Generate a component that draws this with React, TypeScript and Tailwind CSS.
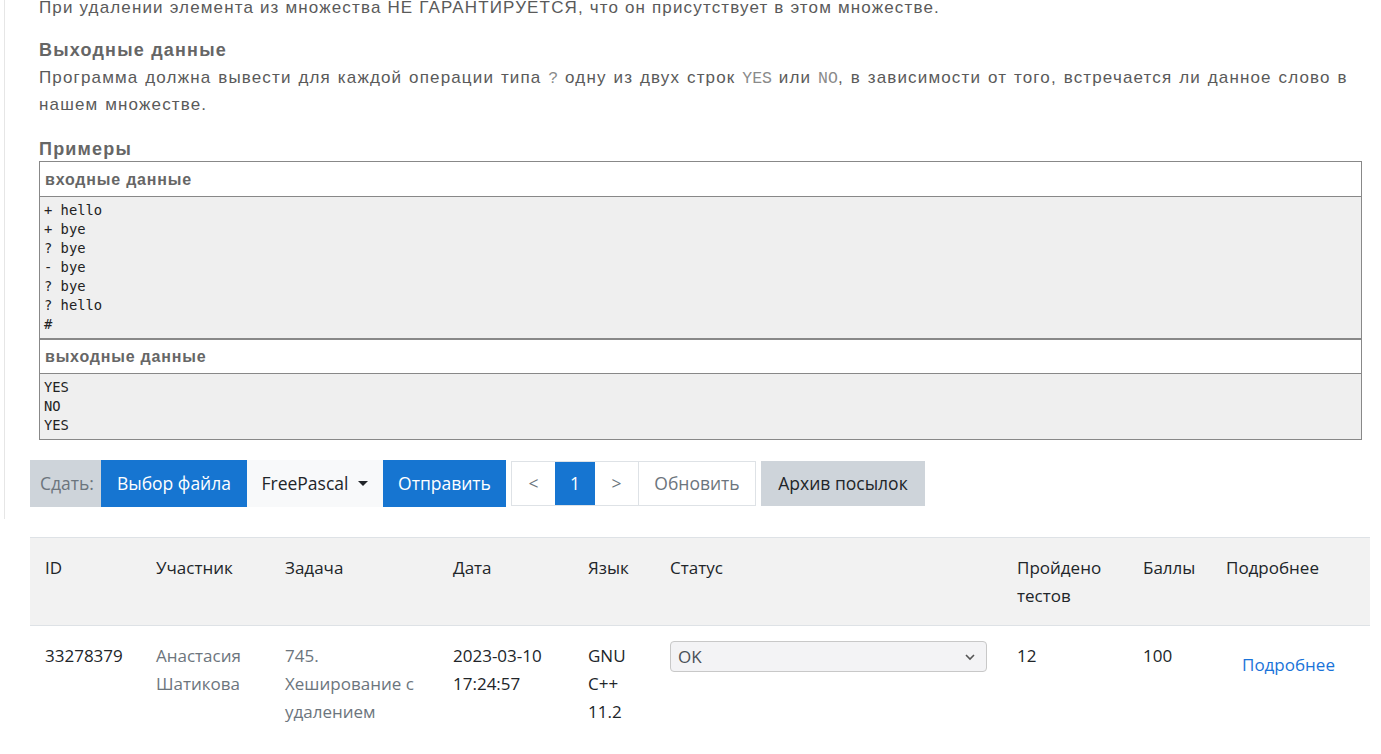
const sans = "font-['Open_Sans','Noto_Sans',sans-serif]";

const inputLines = ["+ hello", "+ bye", "? bye", "- bye", "? bye", "? hello", "#"];
const outputLines = ["YES", "NO", "YES"];

const columns = [
  { title: "ID", width: 111 },
  { title: "Участник", width: 129 },
  { title: "Задача", width: 168 },
  { title: "Дата", width: 135 },
  { title: "Язык", width: 82 },
  { title: "Статус", width: 347 },
  { title: "Пройдено тестов", width: 126 },
  { title: "Баллы", width: 83 },
  { title: "Подробнее", width: 159 },
];

const Code = ({ children }: { children: string }) => (
  <span className="font-['Liberation_Mono',monospace] text-[16.5px] leading-none tracking-normal text-[#8a8a8a]">{children}</span>
);

const SampleBox = ({ title, lines, thin }: { title: string; lines: string[]; thin?: boolean }) => (
  <div className="border border-[#888888]">
    <div className={`border-b border-[#888888] px-[5px] font-['Liberation_Sans',sans-serif] text-[16px] font-bold tracking-[0.8px] text-[#666666] ${thin ? "h-[34px] leading-[34px]" : "h-[35px] leading-[35px]"}`}>
      {title}
    </div>
    <pre className="bg-[#efefef] px-[4px] py-[4px] font-['DejaVu_Sans_Mono',monospace] text-[13.8px] leading-[19px] tracking-normal text-[#222222]">
      {lines.join("\n")}
    </pre>
  </div>
);

const SubmitBar = () => (
  <div className={`flex h-[47px] items-stretch text-[17.5px] ${sans}`}>
    <div className="flex items-center bg-[#ced4da] pl-[10px] pr-[7px] text-[#6c757d]">Сдать:</div>
    <button className="flex w-[146px] items-center justify-center bg-[#1675d1] text-white">Выбор файла</button>
    <button className="flex w-[136px] items-center justify-center gap-[10px] bg-[#f8f9fa] text-[#212529]">
      FreePascal
      <span className="h-0 w-0 border-x-[5px] border-t-[5px] border-x-transparent border-t-[#212529]" />
    </button>
    <button className="flex w-[123px] items-center justify-center bg-[#1675d1] text-white">Отправить</button>
    <div className="ml-[5px] flex h-[45px] self-center border border-[#dee2e6] bg-white">
      <button className="flex w-[43px] items-center justify-center text-[#6c757d]">&lt;</button>
      <button className="flex w-[40px] items-center justify-center bg-[#1675d1] text-white">1</button>
      <button className="flex w-[44px] items-center justify-center border-r border-[#dee2e6] text-[#6c757d]">&gt;</button>
      <button className="flex w-[116px] items-center justify-center text-[#6c757d]">Обновить</button>
    </div>
    <button className="ml-[5px] flex h-[45px] w-[164px] items-center justify-center self-center bg-[#ced4da] text-[#212529]">
      Архив посылок
    </button>
  </div>
);

const Chevron = () => (
  <svg width="12" height="8" viewBox="0 0 12 8" fill="none" stroke="#555" strokeWidth="1.6">
    <path d="M2 2l4 4 4-4" />
  </svg>
);

const Submissions = () => (
  <table className={`ml-[30px] w-[1340px] table-fixed border-collapse text-[17px] leading-[28px] text-[#212529] ${sans}`}>
    <colgroup>
      {columns.map((c) => (
        <col key={c.title} style={{ width: c.width }} />
      ))}
    </colgroup>
    <thead>
      <tr className="border-y border-[#dee2e6] bg-[#f2f2f2]">
        {columns.map((c) => (
          <th key={c.title} className="px-[15px] pt-[16px] pb-[15px] text-left align-top font-normal">
            {c.title === "Пройдено тестов" ? (
              <>
                Пройдено
                <br />
                тестов
              </>
            ) : (
              c.title
            )}
          </th>
        ))}
      </tr>
    </thead>
    <tbody>
      <tr className="align-top">
        <td className="px-[15px] py-[16px]">33278379</td>
        <td className="px-[15px] py-[16px] text-[#6c757d]">Анастасия Шатикова</td>
        <td className="px-[15px] py-[16px] text-[#6c757d]">745. Хеширование с удалением</td>
        <td className="px-[15px] py-[16px]">
          2023-03-10
          <br />
          17:24:57
        </td>
        <td className="px-[15px] py-[16px]">GNU C++ 11.2</td>
        <td className="px-[15px] pt-[15px]">
          <div className="flex h-[31px] items-center justify-between rounded-[4px] border border-[#c8c8c8] bg-[#f3f3f5] pl-[7px] pr-[10px] text-[#495057]">
            OK
            <Chevron />
          </div>
        </td>
        <td className="px-[15px] py-[16px]">12</td>
        <td className="px-[15px] py-[16px]">100</td>
        <td className="px-[15px] py-[16px]">
          <a className="mt-[9px] block pl-[16px] text-[#1a73d9]">Подробнее</a>
        </td>
      </tr>
    </tbody>
  </table>
);

export default function App() {
  return (
    <div className="min-h-screen overflow-hidden bg-white pb-[20px]">
      <div className="ml-[4px] border-l border-[#e6e6e6] pl-[25px] pb-[12px]">
        <div className="mt-[-6px] pl-[9px] pr-[19px] font-['Liberation_Sans',sans-serif] text-[17px] leading-[27px] tracking-[1.15px] text-[#5a5a5a]">
          <p>При удалении элемента из множества НЕ ГАРАНТИРУЕТСЯ, что он присутствует в этом множестве.</p>
          <h3 className="mt-[18px] text-[18px] font-bold leading-[22px] tracking-[1.2px] text-[#666666]">Выходные данные</h3>
          <p className="mt-[3px] [word-spacing:1px]">
            Программа должна вывести для каждой операции типа <Code>?</Code> одну из двух строк <Code>YES</Code> или{" "}
            <Code>NO</Code>, в зависимости от того, встречается ли данное слово в нашем множестве.
          </p>
          <h3 className="mt-[20px] text-[18px] font-bold leading-[22px] tracking-[1.2px] text-[#666666]">Примеры</h3>
          <div className="mt-[1px]">
            <SampleBox title="входные данные" lines={inputLines} />
            <SampleBox title="выходные данные" lines={outputLines} thin />
          </div>
        </div>
        <div className="mt-[20px]">
          <SubmitBar />
        </div>
      </div>
      <div className="mt-[18px]">
        <Submissions />
      </div>
    </div>
  );
}
